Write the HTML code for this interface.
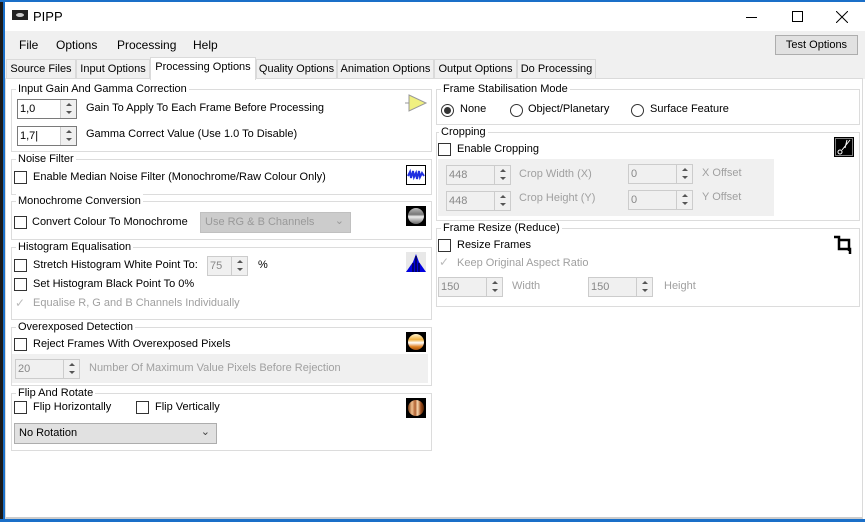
<!DOCTYPE html>
<html><head><meta charset="utf-8"><style>
*{box-sizing:border-box;margin:0;padding:0}
body{width:865px;height:522px;overflow:hidden;background:#fff;font-family:"Liberation Sans",sans-serif;font-size:11px;color:#000;position:relative}
.a{position:absolute;white-space:nowrap}
.gb{position:absolute;border:1px solid #dcdcdc}
.gt{position:absolute;background:#fff;padding:0 2px;top:-8px;left:4px;font-size:11px;line-height:14px;white-space:nowrap}
.cb{position:absolute;width:13px;height:13px;border:1px solid #333;background:#fff}
.sp{position:absolute;border:1px solid #7a7a7a;background:#fff;height:20px;font-size:11px;line-height:18px;padding-left:2px}
.sp.d{border-color:#ccc;background:#f0f0f0;color:#888}
.sp i{position:absolute;right:0;top:0;width:16px;height:18px;border-left:1px solid #ccc;background:#f0f0f0}
.sp i:before{content:"";position:absolute;left:5px;top:3px;border:3px solid transparent;border-bottom:3px solid #555;border-top:0}
.sp i:after{content:"";position:absolute;left:5px;top:11px;border:3px solid transparent;border-top:3px solid #555;border-bottom:0}
.dis{color:#a0a0a0}
.tab{position:absolute;top:59px;height:20px;border:1px solid #dadada;border-bottom:none;background:#f0f0f0;font-size:11px;line-height:18px;text-align:center;white-space:nowrap}
.rd{position:absolute;width:13px;height:13px;border:1px solid #333;border-radius:50%;background:#fff}
.ic{position:absolute;width:20px;height:20px;background:#000}
.m{font-size:12px;top:38px}
</style></head><body>
<div class="a" style="left:0;top:0;width:4px;height:522px;background:#1a1a1a"></div>
<div class="a" style="left:3px;top:0;width:2px;height:522px;background:#1a6fc8"></div>
<div class="a" style="left:0;top:0;width:865px;height:2px;background:#1a6fc8"></div>
<div class="a" style="left:0;top:519px;width:865px;height:3px;background:#1a6fc8"></div>
<!-- title -->
<div class="a" style="left:12px;top:10px;width:16px;height:10px;background:#222"></div>
<div class="a" style="left:16px;top:13px;width:8px;height:4px;background:#ccc;border-radius:50%"></div>
<div class="a" style="left:33px;top:9px;font-size:13px">PIPP</div>
<div class="a" style="left:746px;top:17px;width:11px;height:1px;background:#000"></div>
<div class="a" style="left:792px;top:11px;width:11px;height:11px;border:1px solid #000"></div>
<svg class="a" style="left:836px;top:11px" width="12" height="12"><path d="M0 0L12 12M12 0L0 12" stroke="#000" stroke-width="1"/></svg>
<!-- menu -->
<div class="a" style="left:5px;top:31px;width:860px;height:28px;background:#f0f0f0"></div>
<div class="a m" style="left:19px">File</div>
<div class="a m" style="left:56px">Options</div>
<div class="a m" style="left:117px">Processing</div>
<div class="a m" style="left:193px">Help</div>
<div class="a" style="left:775px;top:35px;width:83px;height:20px;border:1px solid #adadad;background:#e1e1e1;text-align:center;line-height:18px;font-size:11px">Test Options</div>
<!-- tabs -->
<div class="a" style="left:5px;top:59px;width:860px;height:20px;background:#f0f0f0"></div>
<div class="tab" style="left:6px;width:70px">Source Files</div>
<div class="tab" style="left:76px;width:74px">Input Options</div>
<div class="tab" style="left:256px;width:81px">Quality Options</div>
<div class="tab" style="left:337px;width:97px">Animation Options</div>
<div class="tab" style="left:434px;width:83px">Output Options</div>
<div class="tab" style="left:517px;width:79px">Do Processing</div>
<div class="a" style="left:5px;top:78px;width:858px;height:441px;border:1px solid #dadada;background:#fff;border-bottom:2px solid #ccc"></div>
<div class="tab" style="left:150px;top:57px;width:106px;height:23px;background:#fff;line-height:19px">Processing Options</div>

<!-- Input gain -->
<div class="gb" style="left:11px;top:89px;width:421px;height:63px"><span class="gt">Input Gain And Gamma Correction</span></div>
<div class="sp" style="left:17px;top:99px;width:60px">1,0<i></i></div>
<div class="a" style="left:86px;top:102px">Gain To Apply To Each Frame Before Processing</div>
<div class="sp" style="left:17px;top:126px;width:60px">1,7|<i></i></div>
<div class="a" style="left:86px;top:128px">Gamma Correct Value (Use 1.0 To Disable)</div>
<svg class="a" style="left:405px;top:93px" width="24" height="20"><polygon points="4,2 21,10 4,18" fill="#f0f080" stroke="#999"/><line x1="0" y1="10" x2="4" y2="10" stroke="#999"/></svg>
<!-- Noise -->
<div class="gb" style="left:11px;top:159px;width:421px;height:36px"><span class="gt">Noise Filter</span></div>
<div class="cb" style="left:14px;top:171px"></div>
<div class="a" style="left:33px;top:171px">Enable Median Noise Filter (Monochrome/Raw Colour Only)</div>
<svg class="a" style="left:406px;top:165px" width="20" height="20"><rect x="0.5" y="0.5" width="19" height="19" fill="#fff" stroke="#000"/><path d="M2 11 L4 7 L5 13 L7 6 L8 12 L10 8 L11 14 L13 6 L14 12 L16 8 L18 11" stroke="#2030e0" fill="none" stroke-width="2"/></svg>
<!-- Mono -->
<div class="gb" style="left:11px;top:201px;width:421px;height:39px"><span class="gt">Monochrome Conversion</span></div>
<div class="cb" style="left:14px;top:216px"></div>
<div class="a" style="left:32px;top:216px">Convert Colour To Monochrome</div>
<div class="a" style="left:200px;top:212px;width:151px;height:21px;background:#ccc;border:1px solid #c0c0c0;color:#999;padding:3px 0 0 4px">Use RG &amp; B Channels<span style="position:absolute;right:6px;top:1px">⌄</span></div>
<div class="ic" style="left:406px;top:206px"><div style="margin:2px;width:16px;height:16px;border-radius:50%;background:linear-gradient(#bbb,#777 40%,#eee 55%,#666)"></div></div>
<!-- Histogram -->
<div class="gb" style="left:11px;top:247px;width:421px;height:73px"><span class="gt">Histogram Equalisation</span></div>
<div class="cb" style="left:14px;top:259px"></div>
<div class="a" style="left:33px;top:259px">Stretch Histogram White Point To:</div>
<div class="sp d" style="left:207px;top:256px;width:41px">75<i></i></div>
<div class="a" style="left:258px;top:259px">%</div>
<div class="cb" style="left:14px;top:278px"></div>
<div class="a" style="left:33px;top:278px">Set Histogram Black Point To 0%</div>
<div class="a" style="left:15px;top:296px;color:#bbb;font-size:12px">✓</div>
<div class="a dis" style="left:33px;top:297px">Equalise R, G and B Channels Individually</div>
<svg class="a" style="left:406px;top:252px" width="20" height="20"><rect width="20" height="20" fill="#e8e8e8"/><path d="M0 20 L7 10 L10 2 L13 10 L20 20Z" fill="#0000e0"/><path d="M7 11V20M10 4V20M13 11V20" stroke="#000"/></svg>
<!-- Overexposed -->
<div class="gb" style="left:11px;top:327px;width:421px;height:59px"><span class="gt">Overexposed Detection</span></div>
<div class="cb" style="left:14px;top:338px"></div>
<div class="a" style="left:33px;top:338px">Reject Frames With Overexposed Pixels</div>
<div class="a" style="left:12px;top:354px;width:416px;height:29px;background:#f0f0f0"></div>
<div class="sp d" style="left:15px;top:359px;width:65px">20<i></i></div>
<div class="a dis" style="left:89px;top:362px">Number Of Maximum Value Pixels Before Rejection</div>
<div class="ic" style="left:406px;top:332px"><div style="margin:2px;width:16px;height:16px;border-radius:50%;background:linear-gradient(#fff6d0,#f0b040 35%,#fff 55%,#e08020 80%,#a05010)"></div></div>
<!-- Flip -->
<div class="gb" style="left:11px;top:393px;width:421px;height:58px"><span class="gt">Flip And Rotate</span></div>
<div class="cb" style="left:14px;top:401px"></div>
<div class="a" style="left:33px;top:401px">Flip Horizontally</div>
<div class="cb" style="left:136px;top:401px"></div>
<div class="a" style="left:155px;top:401px">Flip Vertically</div>
<div class="a" style="left:14px;top:423px;width:203px;height:21px;background:#e1e1e1;border:1px solid #adadad;padding:3px 0 0 4px">No Rotation<span style="position:absolute;right:6px;top:1px;color:#444">⌄</span></div>
<div class="ic" style="left:406px;top:398px"><div style="margin:2px;width:16px;height:16px;border-radius:50%;background:linear-gradient(90deg,#7a3a10,#f0c090 25%,#b06030 45%,#f8d8b0 60%,#a05020 80%,#502000)"></div></div>

<!-- Right: stabilisation -->
<div class="gb" style="left:436px;top:89px;width:424px;height:36px"><span class="gt">Frame Stabilisation Mode</span></div>
<div class="rd" style="left:441px;top:104px"><div style="margin:2px;width:7px;height:7px;border-radius:50%;background:#333"></div></div>
<div class="a" style="left:460px;top:103px">None</div>
<div class="rd" style="left:510px;top:104px"></div>
<div class="a" style="left:528px;top:103px">Object/Planetary</div>
<div class="rd" style="left:631px;top:104px"></div>
<div class="a" style="left:650px;top:103px">Surface Feature</div>
<!-- Cropping -->
<div class="gb" style="left:436px;top:132px;width:424px;height:89px"><span class="gt" style="left:2px">Cropping</span></div>
<div class="cb" style="left:438px;top:143px"></div>
<div class="a" style="left:457px;top:143px">Enable Cropping</div>
<div class="a" style="left:438px;top:159px;width:336px;height:57px;background:#f0f0f0"></div>
<div class="sp d" style="left:446px;top:165px;width:65px">448<i></i></div>
<div class="a dis" style="left:519px;top:168px">Crop Width (X)</div>
<div class="sp d" style="left:446px;top:191px;width:65px">448<i></i></div>
<div class="a dis" style="left:519px;top:192px">Crop Height (Y)</div>
<div class="sp d" style="left:628px;top:164px;width:65px">0<i></i></div>
<div class="a dis" style="left:702px;top:167px">X Offset</div>
<div class="sp d" style="left:628px;top:190px;width:65px">0<i></i></div>
<div class="a dis" style="left:702px;top:191px">Y Offset</div>
<svg class="a" style="left:834px;top:137px" width="20" height="20"><rect width="20" height="20" fill="#000"/><rect x="1.5" y="1.5" width="17" height="17" fill="none" stroke="#fff" stroke-dasharray="1,1"/><path d="M16 3 L8 13 M13 3 L11 11" stroke="#fff"/><circle cx="6" cy="15" r="2" fill="none" stroke="#fff"/></svg>
<!-- Resize -->
<div class="gb" style="left:436px;top:228px;width:424px;height:79px"><span class="gt">Frame Resize (Reduce)</span></div>
<div class="cb" style="left:438px;top:239px"></div>
<div class="a" style="left:457px;top:239px">Resize Frames</div>
<div class="a" style="left:439px;top:255px;color:#bbb;font-size:12px">✓</div>
<div class="a dis" style="left:457px;top:257px">Keep Original Aspect Ratio</div>
<div class="sp d" style="left:438px;top:277px;width:65px">150<i></i></div>
<div class="a dis" style="left:512px;top:280px">Width</div>
<div class="sp d" style="left:588px;top:277px;width:65px">150<i></i></div>
<div class="a dis" style="left:664px;top:280px">Height</div>
<svg class="a" style="left:834px;top:234px" width="20" height="20"><path d="M0 3H5V15H16V20" stroke="#000" stroke-width="2.5" fill="none"/><path d="M5 6H15V17" stroke="#000" stroke-width="2.5" fill="none"/></svg>
</body></html>
